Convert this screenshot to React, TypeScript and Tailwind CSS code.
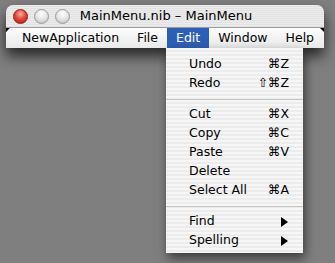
type Item = { label: string; keys?: string; submenu?: boolean } | 'sep'

const items: Item[] = [
  { label: 'Undo', keys: '⌘Z' },
  { label: 'Redo', keys: '⇧⌘Z' },
  'sep',
  { label: 'Cut', keys: '⌘X' },
  { label: 'Copy', keys: '⌘C' },
  { label: 'Paste', keys: '⌘V' },
  { label: 'Delete' },
  { label: 'Select All', keys: '⌘A' },
  'sep',
  { label: 'Find', submenu: true },
  { label: 'Spelling', submenu: true },
]

const menus = ['NewApplication', 'File', 'Edit', 'Window', 'Help']

function Light({ red }: { red?: boolean }) {
  return (
    <div
      className={
        red
          ? 'w-[15px] h-[15px] rounded-full border border-[#8a1c14] bg-[radial-gradient(circle_at_50%_30%,#ffb3a8_0%,#e6463a_45%,#b5190f_100%)]'
          : 'w-[15px] h-[15px] rounded-full border border-[#9a9a9a] bg-[radial-gradient(circle_at_50%_30%,#ffffff_0%,#e4e4e4_50%,#b8b8b8_100%)]'
      }
    />
  )
}

function EditMenu() {
  return (
    <div className="absolute left-[166px] top-[48px] w-[137px] pt-[7px] pb-[3px] text-[12.5px] bg-[repeating-linear-gradient(to_bottom,#f6f6f6_0px,#f6f6f6_2px,#ececec_2px,#ececec_4px)] shadow-[2px_5px_10px_rgba(0,0,0,0.55)]">
      {items.map((it, i) =>
        it === 'sep' ? (
          <div key={i} className="h-[12px] flex items-center">
            <div className="h-px w-full bg-[#c4c4c4]" />
          </div>
        ) : (
          <div key={i} className="h-[19px] flex items-center pl-[23px] pr-[14px]">
            <span className="flex-1">{it.label}</span>
            {it.keys && <span>{it.keys}</span>}
            {it.submenu && (
              <svg width="7" height="10" viewBox="0 0 7 10" className="mr-[1px]">
                <path d="M0 0 L7 5 L0 10 Z" fill="#000" />
              </svg>
            )}
          </div>
        )
      )}
    </div>
  )
}

export default function App() {
  return (
    <div className="relative w-[335px] h-[263px] overflow-hidden bg-[#7f7f7f] text-black text-[13px] font-['Lucida_Grande','DejaVu_Sans',sans-serif]">
      <div className="pt-[5px] pl-[6px]">
        <div className="relative w-[318px] rounded-t-[7px] shadow-[0_8px_14px_rgba(0,0,0,0.7)]">
          {/* title bar */}
          <div className="relative h-[23px] rounded-t-[7px] flex items-center px-[7px] gap-[6px] border-b border-[#9c9c9c] bg-[repeating-linear-gradient(to_bottom,#ececec_0px,#ececec_1px,#e2e2e2_1px,#e2e2e2_2px)]">
            <Light red />
            <Light />
            <Light />
            <div className="absolute inset-0 flex items-center justify-center pl-[2px]">
              MainMenu.nib – MainMenu
            </div>
          </div>
          {/* menu bar */}
          <div className="relative h-[20px] flex pl-[7px] text-[12.5px] bg-[linear-gradient(to_bottom,#fdfdfd,#e9e9e9)]">
            {menus.map((m) => (
              <div
                key={m}
                className={
                  m === 'Edit'
                    ? 'h-full flex items-center px-[9px] bg-[#2c5fb8] text-white'
                    : 'h-full flex items-center px-[9px]'
                }
              >
                {m}
              </div>
            ))}
            <div className="absolute left-0 top-0 w-0 h-0 border-t-[4px] border-t-black border-r-[4px] border-r-transparent" />
            <div className="absolute right-0 top-0 w-0 h-0 border-t-[4px] border-t-black border-l-[4px] border-l-transparent" />
          </div>
        </div>
      </div>
      <EditMenu />
    </div>
  )
}
